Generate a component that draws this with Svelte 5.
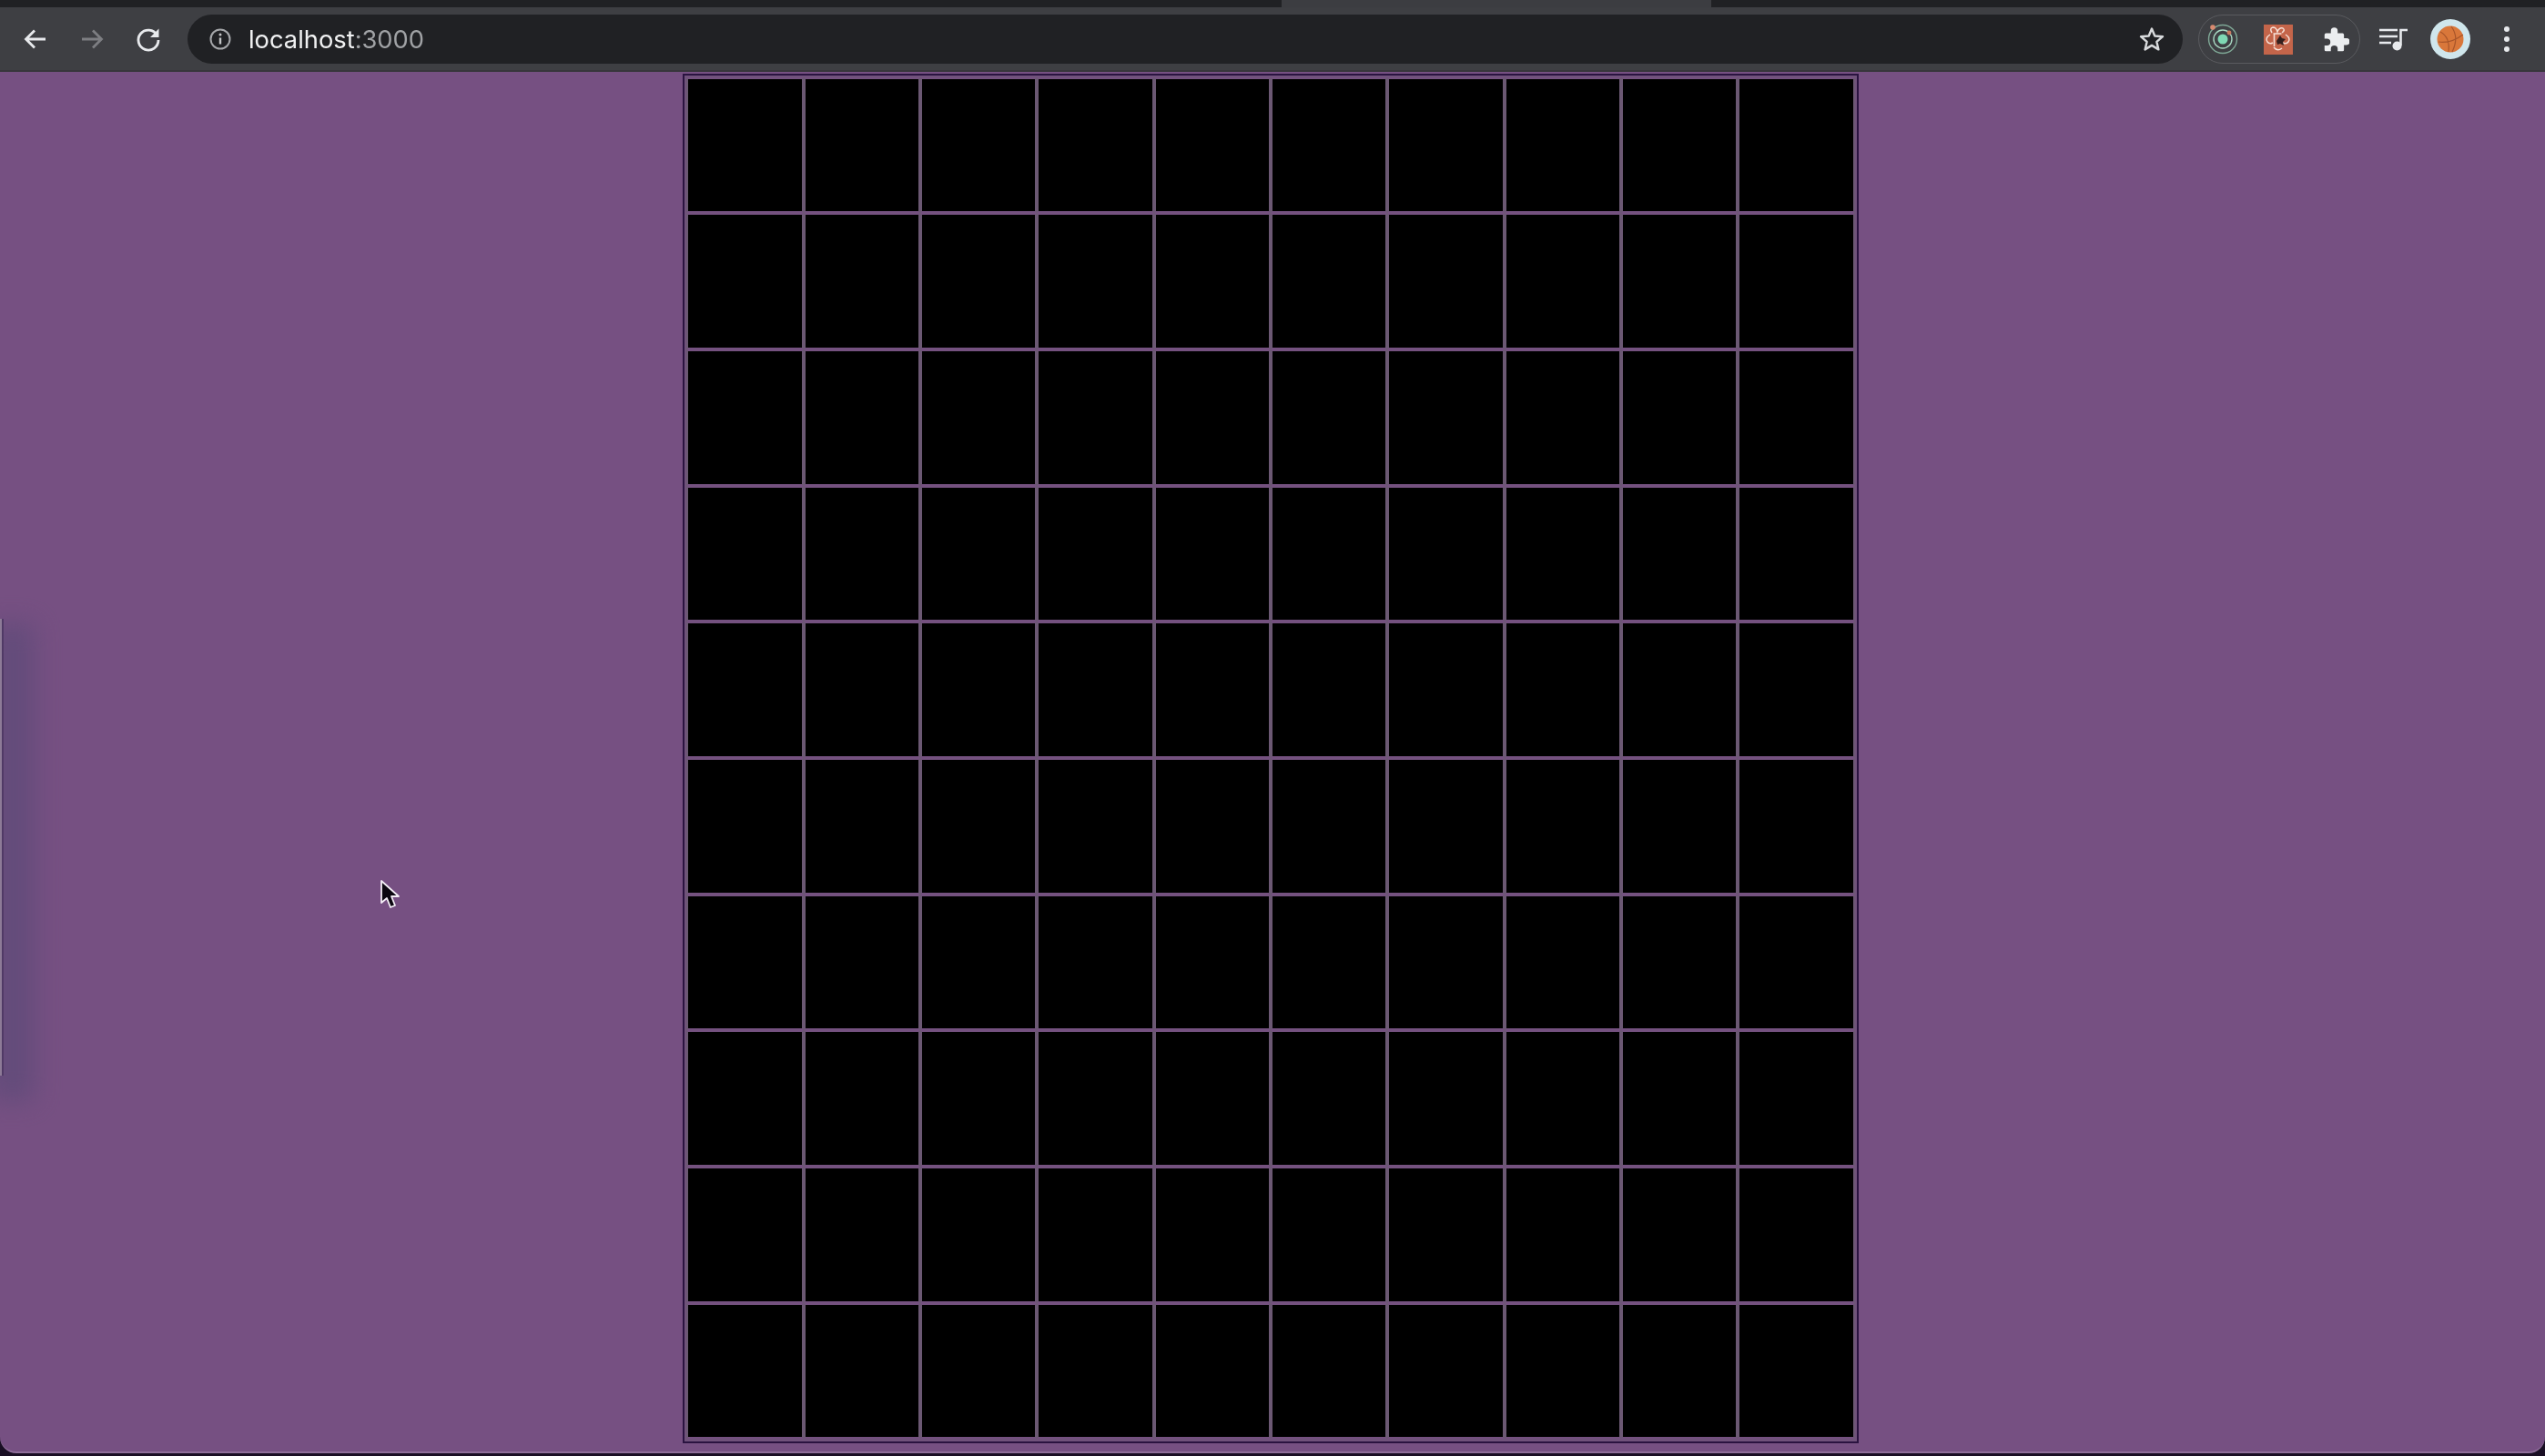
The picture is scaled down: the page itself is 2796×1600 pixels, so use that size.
<script>
  const cells = Array.from({ length: 100 }, (_, i) => i);
</script>

<div class="window">
  <div class="tabstrip">
    <div class="tab"></div>
  </div>

  <header class="toolbar">
    <nav class="nav">
      <svg class="icon" viewBox="0 0 30 30"><path d="M26 15H5M14 5.500 4.500 15l9.500 9.500" fill="none" stroke="#e8eaed" stroke-width="2.800"/></svg>
      <svg class="icon" viewBox="0 0 30 30"><path d="M4 15h21M16 5.500l9.500 9.500-9.500 9.500" fill="none" stroke="#7d7e82" stroke-width="2.800"/></svg>
      <svg class="icon" viewBox="0 0 30 30"><path d="M24.500 10.500A11 11 0 1 0 26 16" fill="none" stroke="#e8eaed" stroke-width="2.800"/><path d="M26.500 3.500v9.500h-9.500z" fill="#e8eaed"/></svg>
    </nav>

    <div class="omnibox">
      <svg class="info" viewBox="0 0 26 26"><circle cx="13" cy="13" r="10.500" fill="none" stroke="#a5a7aa" stroke-width="2"/><path d="M13 11.500v7" stroke="#c4c6c8" stroke-width="2.400"/><circle cx="13" cy="8" r="1.500" fill="#c4c6c8"/></svg>
      <span class="url"><span class="host">localhost</span><span class="port">:3000</span></span>
      <svg class="star" viewBox="0 0 30 30"><path d="m15 3.500 3.300 8 8.700.7-6.600 5.700 2 8.500L15 21.900l-7.400 4.500 2-8.500L3 12.200l8.700-.7z" fill="none" stroke="#d8dadc" stroke-width="2.400" stroke-linejoin="round"/></svg>
    </div>

    <div class="extensions">
      <svg class="radar" viewBox="0 0 34 34">
        <circle cx="17" cy="17" r="15.500" fill="none" stroke="#7fa896" stroke-width="1.400"/>
        <circle cx="17" cy="17" r="10" fill="none" stroke="#a8d8c2" stroke-width="1.400"/>
        <circle cx="17" cy="17" r="5.500" fill="#7fd8b4"/>
        <circle cx="6" cy="4" r="2.800" fill="#d98a70"/>
        <circle cx="24" cy="10" r="2.400" fill="#c97a60"/>
      </svg>
      <svg class="square" viewBox="0 0 32 33">
        <rect width="32" height="33" fill="#c4654a"/>
        <path d="M9 9q-3-5 1-6 4 0 5 5 2-5 6-4 3 2-1 5M7 11q-6 4-3 8 2 3 6 1M24 11q6 4 3 8-2 3-6 1M11 25q4 5 9 1" fill="none" stroke="#f6dfd6" stroke-width="1.500"/>
        <path d="M10.500 10h9M11.500 10v14" stroke="#f6dfd6" stroke-width="1.600"/>
        <path d="M14 18l4-6 2 3 4 1-3 3 1 4-4-2-3 1z" fill="#33201e"/>
      </svg>
      <svg class="puzzle" viewBox="0 0 30 30"><path d="M6 9h5V6.500a3.500 3.500 0 0 1 7 0V9h5a1.500 1.500 0 0 1 1.500 1.500V14H27a3.500 3.500 0 0 1 0 7h-2.500v5a1.500 1.500 0 0 1-1.500 1.500h-5V25a3.500 3.500 0 0 0-7 0v2.500H6A1.500 1.500 0 0 1 4.500 26v-4.500H7a3.500 3.500 0 0 0 0-7H4.500v-4A1.500 1.500 0 0 1 6 9z" fill="#eceef0"/></svg>
    </div>

    <svg class="music" viewBox="0 0 32 26"><path d="M0 3h20M0 10h20M0 17h13" stroke="#e8eaed" stroke-width="2.600"/><path d="M23.500 20V3H31" fill="none" stroke="#e8eaed" stroke-width="2.600"/><circle cx="19.500" cy="20.500" r="5" fill="#e8eaed"/></svg>

    <div class="avatar">
      <svg viewBox="0 0 44 44">
        <circle cx="22" cy="22" r="22" fill="#cfe6ec"/>
        <circle cx="22" cy="22" r="14.500" fill="#d9773a"/>
        <path d="M11 14q11 6 9 22M23 8q9 12 1 28M9 25q14 2 27-8" fill="none" stroke="#a8552a" stroke-width="1.200"/>
      </svg>
    </div>

    <div class="dots"><i></i><i></i><i></i></div>
  </header>

  <main class="page">
    <div class="board">
      {#each cells as c (c)}
        <div class="cell"></div>
      {/each}
    </div>

    <div class="shade"></div>
    <div class="handle"></div>
    <svg class="cursor" viewBox="0 0 24 34">
      <path d="M2 2v24l6-5 4 10 5-2-4-10h8z" fill="#0b0710" stroke="#f4eef6" stroke-width="1.800" stroke-linejoin="round"/>
    </svg>
  </main>
</div>

<style>
  :global(body) {
    margin: 0;
    background: #1a0f24;
  }

  .window {
    width: 2796px;
    height: 1600px;
    display: flex;
    flex-direction: column;
    overflow: hidden;
    font-family: Inter, "Liberation Sans", sans-serif;
  }

  .tabstrip {
    height: 8px;
    flex: none;
    background: #202124;
    display: flex;
    padding-left: 1408px;
  }

  .tab {
    width: 472px;
    background: #3c3d41;
  }

  .toolbar {
    height: 71px;
    flex: none;
    box-sizing: border-box;
    background: #3e3f43;
    border-bottom: 2px solid #38363c;
    display: flex;
    align-items: center;
    padding: 1px 0 0 24px;
    filter: blur(0.7px);
  }

  .nav {
    display: flex;
    gap: 32px;
    align-items: center;
  }

  .icon {
    width: 30px;
    height: 30px;
    display: block;
  }

  .omnibox {
    width: 2192px;
    height: 54px;
    margin-left: 28px;
    box-sizing: border-box;
    background: #202124;
    border-radius: 27px;
    display: flex;
    align-items: center;
    padding: 0 19px 0 23px;
  }

  .info {
    width: 26px;
    height: 26px;
    flex: none;
  }

  .url {
    margin-left: 18px;
    font-size: 27.300px;
    flex: 1;
    white-space: nowrap;
  }

  .host {
    color: #f0f1f2;
  }

  .port {
    color: #a0a2a5;
  }

  .star {
    width: 30px;
    height: 30px;
    flex: none;
  }

  .extensions {
    width: 178px;
    height: 54px;
    margin-left: 17px;
    box-sizing: border-box;
    border: 1.500px solid #5a5b5f;
    border-radius: 27px;
    display: flex;
    align-items: center;
    padding-left: 9px;
  }

  .radar {
    width: 34px;
    height: 34px;
    flex: none;
  }

  .square {
    width: 32px;
    height: 33px;
    flex: none;
    margin-left: 28px;
  }

  .puzzle {
    width: 32px;
    height: 32px;
    flex: none;
    margin-left: 30px;
  }

  .music {
    width: 32px;
    height: 26px;
    flex: none;
    margin-left: 21px;
  }

  .avatar {
    width: 44px;
    height: 44px;
    flex: none;
    margin-left: 24px;
  }

  .avatar svg {
    display: block;
    width: 44px;
    height: 44px;
  }

  .dots {
    margin-left: 37px;
    display: flex;
    flex-direction: column;
    gap: 5px;
  }

  .dots i {
    display: block;
    width: 6px;
    height: 6px;
    border-radius: 50%;
    background: #e8eaed;
  }

  .page {
    position: relative;
    flex: 1;
    background: #765082;
    display: flex;
    justify-content: center;
    padding-right: 4px;
    border-radius: 0 0 18px 18px;
    border-bottom: 2px solid #8f6f9a;
    box-sizing: border-box;
    margin-bottom: 3px;
    overflow: hidden;
  }

  .board {
    width: 1291.500px;
    height: 1505px;
    box-sizing: border-box;
    margin-top: 1.500px;
    border: 2px solid #2a1340;
    padding: 2px;
    display: grid;
    grid-template-columns: repeat(10, 1fr);
    grid-template-rows: repeat(10, 1fr);
    background: #70527b;
    filter: blur(0.4px);
  }

  .cell {
    box-sizing: border-box;
    background: #000;
    border-style: solid;
    border-width: 2px;
    border-color: #74517f #6b5873;
  }

  .shade {
    position: absolute;
    left: -12px;
    top: 606px;
    width: 50px;
    height: 525px;
    background: #5c4a78;
    opacity: 0.7;
    filter: blur(14px);
  }

  .handle {
    position: absolute;
    left: 0;
    top: 601px;
    width: 4px;
    height: 502px;
    background: linear-gradient(90deg, #8d7b97 2px, #503a66 2px);
  }

  .cursor {
    position: absolute;
    left: 417px;
    top: 887px;
    width: 24px;
    height: 34px;
    filter: blur(0.5px);
  }
</style>
